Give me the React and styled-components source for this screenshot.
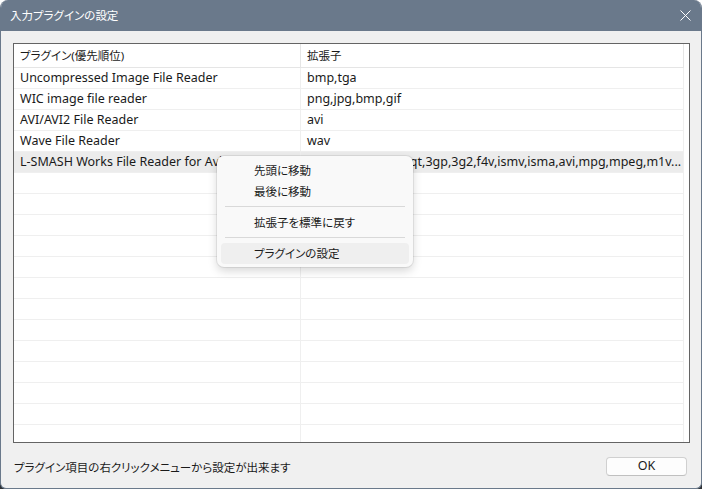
import React from 'react';
import styled, { createGlobalStyle } from 'styled-components';

const GlobalStyle = createGlobalStyle`
  html, body { margin: 0; padding: 0; }
  html { background: linear-gradient(to bottom, #ffffff 50%, #2e3236 50%); }
  body {
    font-family: "Noto Sans", "Noto Sans CJK JP", sans-serif;
    font-size: 12px;
    font-feature-settings: "palt";
    color: #1a1a1a;
  }
`;

const Window = styled.div`
  position: relative;
  width: 702px;
  height: 489px;
  box-sizing: border-box;
  display: flex;
  flex-direction: column;
  background: #f0f0f0;
  border: 1px solid #6a798b;
  border-top: none;
  border-radius: 8px 8px 6px 6px;
  overflow: hidden;
`;

const TitleBar = styled.div`
  height: 31px;
  flex: none;
  display: flex;
  align-items: center;
  justify-content: space-between;
  background: #6a798b;
  color: #ffffff;
  padding: 0 10px 0 10px;
  margin: 0 -1px;
`;

const Title = styled.span`
  font-size: 11.5px;
  line-height: 1;
  padding-top: 1px;
`;

const CloseIcon = () => (
  <svg width="11" height="11" viewBox="0 0 11 11" style={{ marginRight: 1 }}>
    <path d="M0.5 0.5 L10.5 10.5 M10.5 0.5 L0.5 10.5" stroke="#ffffff" strokeWidth="1" />
  </svg>
);

const Body = styled.div`
  flex: 1;
  display: flex;
  flex-direction: column;
  padding: 12px 11px 0 12px;
`;

const ListBox = styled.div`
  height: 400px;
  box-sizing: border-box;
  border: 1px solid #646464;
  background: #ffffff;
  overflow: hidden;
  display: flex;
  flex-direction: column;
`;

const Row = styled.div`
  display: grid;
  grid-template-columns: 287px 383px;
  height: ${(p) => (p.$header ? 24 : 21)}px;
  flex: none;
  box-sizing: border-box;
  border-bottom: 1px solid ${(p) => (p.$header ? '#e5e5e5' : '#efefef')};
  background: ${(p) => (p.$selected ? '#ececec' : 'transparent')};
  width: 670px;
`;

const Cell = styled.div`
  display: flex;
  align-items: center;
  padding-left: 6px;
  white-space: nowrap;
  overflow: hidden;
  box-sizing: border-box;
  border-right: 1px solid ${(p) => (p.$header ? '#e5e5e5' : '#efefef')};
  font-size: ${(p) => (p.$header ? 11.5 : 12.5)}px;
  line-height: 1;
  padding-top: 1px;
`;

const Footer = styled.div`
  height: 46px;
  display: flex;
  align-items: center;
  justify-content: space-between;
  padding: 0 3px 0 1px;
`;

const Hint = styled.span`
  font-size: 11.5px;
  padding-top: 1px;
`;

const OkButton = styled.button`
  width: 81px;
  height: 19px;
  margin-top: 1px;
  box-sizing: border-box;
  border: 1px solid #d0d0d0;
  border-bottom-color: #c0c0c0;
  border-radius: 4px;
  background: #fdfdfd;
  font: inherit;
  font-size: 12.5px;
  color: #1a1a1a;
  padding: 0;
  line-height: 1;
`;

const Menu = styled.div`
  position: absolute;
  z-index: 10;
  left: 216px;
  top: 156px;
  width: 196px;
  box-sizing: border-box;
  padding: 4px 4px 3px;
  background: #f9f9f9;
  border-radius: 7px;
  box-shadow: 0 0 0 1px rgba(0, 0, 0, 0.07), 0 4px 10px rgba(0, 0, 0, 0.16);
`;

const MenuItem = styled.div`
  height: 21px;
  display: flex;
  align-items: center;
  padding-left: 33px;
  border-radius: 4px;
  background: ${(p) => (p.$hover ? '#efefef' : 'transparent')};
  font-size: 11.5px;
  line-height: 1;
`;

const Separator = styled.div`
  height: 1px;
  background: #d9d9d9;
  margin: 4px 4px 5px;
`;

const plugins = [
  ['Uncompressed Image File Reader', 'bmp,tga'],
  ['WIC image file reader', 'png,jpg,bmp,gif'],
  ['AVI/AVI2 File Reader', 'avi'],
  ['Wave File Reader', 'wav'],
  ['L-SMASH Works File Reader for AviUtl2', 'mp4,m4v,flv,mov,qt,3gp,3g2,f4v,ismv,isma,avi,mpg,mpeg,m1v...'],
];

const App = () => {
  const rows = [...plugins];
  while (rows.length < 18) rows.push(['', '']);

  return (
    <>
      <GlobalStyle />
      <Window>
        <TitleBar>
          <Title>入力プラグインの設定</Title>
          <CloseIcon />
        </TitleBar>
        <Body>
          <ListBox>
            <Row $header>
              <Cell $header>プラグイン(優先順位)</Cell>
              <Cell $header>拡張子</Cell>
            </Row>
            {rows.map(([name, ext], i) => (
              <Row key={i} $selected={i === 4}>
                <Cell>{name}</Cell>
                <Cell>{ext}</Cell>
              </Row>
            ))}
          </ListBox>
          <Footer>
            <Hint>プラグイン項目の右クリックメニューから設定が出来ます</Hint>
            <OkButton>OK</OkButton>
          </Footer>
        </Body>
        <Menu>
          <MenuItem>先頭に移動</MenuItem>
          <MenuItem>最後に移動</MenuItem>
          <Separator />
          <MenuItem>拡張子を標準に戻す</MenuItem>
          <Separator />
          <MenuItem $hover>プラグインの設定</MenuItem>
        </Menu>
      </Window>
    </>
  );
};

export default App;
